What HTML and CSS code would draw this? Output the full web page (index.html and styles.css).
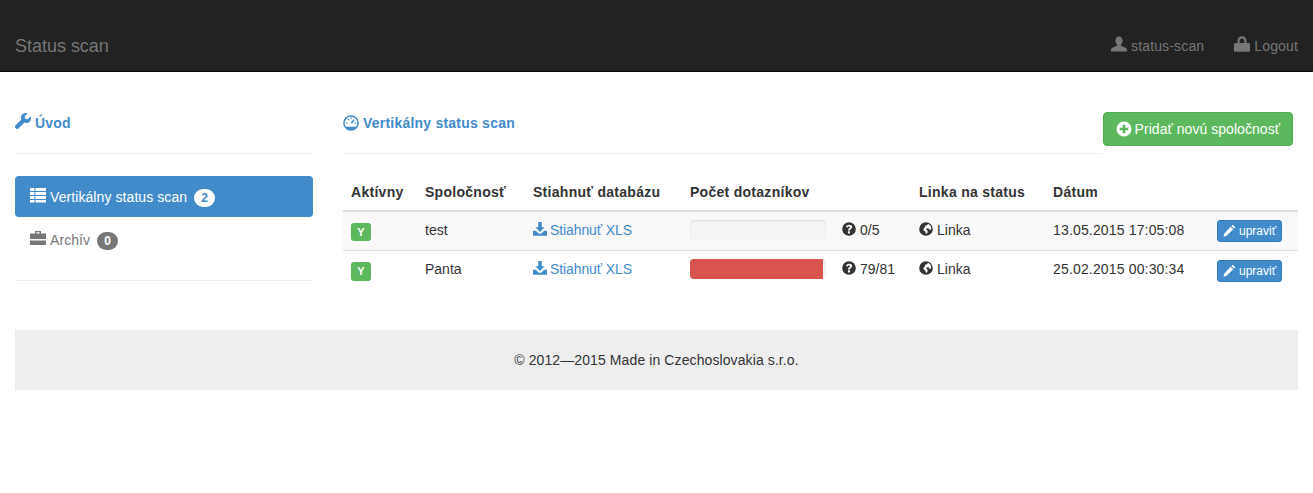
FILE: index.html
```html
<!DOCTYPE html>
<html lang="sk">
<head>
<meta charset="utf-8">
<title>Status scan</title>
<link rel="stylesheet" href="styles.css">
</head>
<body>
<svg class="defs" width="0" height="0" aria-hidden="true">
  <symbol id="i-wrench" viewBox="0 0 16 16"><path d="M15.6 3.4 12.7 6.3 10.2 5.8 9.7 3.3 12.6.4A4.7 4.7 0 0 0 6.4 6.6L.7 12.3a2.1 2.1 0 0 0 3 3L9.4 9.6A4.7 4.7 0 0 0 15.6 3.4Z"/></symbol>
  <symbol id="i-dash" viewBox="0 0 16 16"><path fill-rule="evenodd" d="M8 .2a7.800 7.800 0 1 0 0 15.600 7.800 7.800 0 0 0 0-15.600Zm0 1.500a6.300 6.300 0 0 1 6.300 6.300c0 1.400-.5 2.700-1.200 3.700H2.900A6.300 6.300 0 0 1 8 1.700Z"/><path d="M7.400 2.600h1.200v1.700H7.400zM2.800 7.400h1.700v1.200H2.800zM11.500 7.400h1.700v1.200h-1.700zM4.200 4l.9-.8 1.200 1.200-.8.9zM10.800 4.200l.9.8-2.700 3.800-1.400-1.200z"/></symbol>
  <symbol id="i-list" viewBox="0 0 16 16"><path d="M0 1h4.400v3H0zM5.400 1H16v3H5.400zM0 5h4.400v3H0zM5.400 5H16v3H5.400zM0 9h4.400v3H0zM5.400 9H16v3H5.400zM0 13h4.400v2.600H0zM5.400 13H16v2.600H5.400z"/></symbol>
  <symbol id="i-case" viewBox="0 0 16 16"><path fill-rule="evenodd" d="M5 1h6v2.500h5V9H0V3.500h5V1Zm1.300 1.200v1.300h3.400V2.200H6.300Z"/><path d="M0 10.500h16V15H0z"/></symbol>
  <symbol id="i-user" viewBox="0 0 16 16"><path d="M8 .5c2.300 0 3.600 1.800 3.600 4 0 1.700-.7 3.200-1.600 4v1.300c2.500.8 5 1.800 6 3.400v2.300H0v-2.300c1-1.600 3.500-2.600 6-3.400V8.500c-.9-.8-1.600-2.300-1.600-4 0-2.200 1.300-4 3.600-4Z"/></symbol>
  <symbol id="i-lock" viewBox="0 0 16 16"><path fill-rule="evenodd" d="M8 .3c2.600 0 4.500 1.800 4.500 4.400V7H15a1 1 0 0 1 1 1v6.700a1 1 0 0 1-1 1H1a1 1 0 0 1-1-1V8a1 1 0 0 1 1-1h2.500V4.700C3.500 2.100 5.400.3 8 .3Zm0 2.200c-1.400 0-2.400 1-2.400 2.300V7h4.800V4.800c0-1.300-1-2.300-2.400-2.300Z"/></symbol>
  <symbol id="i-plus" viewBox="0 0 16 16"><path fill-rule="evenodd" d="M8 .5a7.500 7.500 0 1 0 0 15 7.500 7.500 0 0 0 0-15ZM6.700 3.800h2.600v2.900h2.900v2.600H9.300v2.900H6.700V9.300H3.800V6.700h2.900V3.800Z"/></symbol>
  <symbol id="i-down" viewBox="0 0 16 16"><path d="M6 0h4v6h3.200L8 11.400 2.800 6H6zM0 10h3.200l3.500 3.300h2.600L12.800 10H16v5.600H0z"/></symbol>
  <symbol id="i-help" viewBox="0 0 16 16"><path fill-rule="evenodd" d="M8 .2a7.800 7.800 0 1 0 0 15.600A7.800 7.800 0 0 0 8 .2ZM8.200 3c2 0 3.400 1 3.400 2.700 0 1.300-.8 2-1.700 2.600-.6.400-.9.700-.9 1.300H6.900c0-1.300.5-1.900 1.300-2.500.6-.4 1-.7 1-1.200S8.800 5 8 5c-.9 0-1.300.5-1.500 1.300L4.400 5.800C4.800 4 6.200 3 8.200 3ZM6.800 10.600h2.300V13H6.800z"/></symbol>
  <symbol id="i-globe" viewBox="0 0 16 16"><path fill-rule="evenodd" d="M8 .2a7.800 7.800 0 1 0 0 15.600A7.800 7.800 0 0 0 8 .2Zm2.600 1.900 3 2.800.5 3.100-1.700 1.300-1.300-1.800-2.200-.3-.6 1.500 1.700 1.600-.4 2.300-1.600 1.200-.9-2.900-1.900-1.300V7.400L7 5.800l-.3-1.600 1.900-.3z"/></symbol>
  <symbol id="i-pencil" viewBox="0 0 16 16"><path d="M12 .8 15.200 4l-1.600 1.600-3.200-3.200zM9.400 3.400l3.200 3.200-8 8-4 1 1-4z"/></symbol>
</svg>

<header class="topbar">
  <a class="brand">Status scan</a>
  <nav class="topnav">
    <a class="topnav-item"><svg class="icon"><use href="#i-user"/></svg>status-scan</a>
    <a class="topnav-item"><svg class="icon"><use href="#i-lock"/></svg>Logout</a>
  </nav>
</header>

<div class="page">
  <div class="columns">
    <aside class="side">
      <h4 class="head"><svg class="icon"><use href="#i-wrench"/></svg>Úvod</h4>
      <ul class="pills">
        <li class="pill active"><svg class="icon"><use href="#i-list"/></svg>Vertikálny status scan<span class="badge">2</span></li>
        <li class="pill"><svg class="icon"><use href="#i-case"/></svg>Archív<span class="badge">0</span></li>
      </ul>
    </aside>
    <main class="content">
      <div class="content-top">
        <h4 class="head head-main"><svg class="icon"><use href="#i-dash"/></svg>Vertikálny status scan</h4>
        <a class="btn-add"><svg class="icon"><use href="#i-plus"/></svg>Pridať novú spoločnosť</a>
      </div>
      <table class="grid">
        <colgroup>
          <col class="c1"><col class="c2"><col class="c3"><col class="c4"><col class="c5"><col class="c6"><col class="c7"><col class="c8">
        </colgroup>
        <thead>
          <tr><th>Aktívny</th><th>Spoločnosť</th><th>Stiahnuť databázu</th><th colspan="2">Počet dotazníkov</th><th>Linka na status</th><th>Dátum</th><th></th></tr>
        </thead>
        <tbody>
          <tr>
            <td><span class="label">Y</span></td>
            <td>test</td>
            <td><a class="link"><svg class="icon"><use href="#i-down"/></svg>Stiahnuť XLS</a></td>
            <td><div class="progress"></div></td>
            <td><svg class="icon"><use href="#i-help"/></svg>0/5</td>
            <td><svg class="icon"><use href="#i-globe"/></svg>Linka</td>
            <td class="date">13.05.2015 17:05:08</td>
            <td><a class="btn-edit"><svg class="icon"><use href="#i-pencil"/></svg>upraviť</a></td>
          </tr>
          <tr>
            <td><span class="label">Y</span></td>
            <td>Panta</td>
            <td><a class="link"><svg class="icon"><use href="#i-down"/></svg>Stiahnuť XLS</a></td>
            <td><div class="progress"><div class="bar" style="width:97.5%"></div></div></td>
            <td><svg class="icon"><use href="#i-help"/></svg>79/81</td>
            <td><svg class="icon"><use href="#i-globe"/></svg>Linka</td>
            <td class="date">25.02.2015 00:30:34</td>
            <td><a class="btn-edit"><svg class="icon"><use href="#i-pencil"/></svg>upraviť</a></td>
          </tr>
        </tbody>
      </table>
    </main>
  </div>
  <footer class="foot">© 2012—2015 Made in Czechoslovakia s.r.o.</footer>
</div>
</body>
</html>
```

FILE: styles.css
```css
* { box-sizing: border-box; }
html, body { margin: 0; padding: 0; }
body {
  background: #fff;
  color: #333;
  font: 14px/20px "Liberation Sans", Arial, sans-serif;
}
.defs { position: absolute; }
.icon {
  display: inline-block;
  width: 14px;
  height: 14px;
  fill: currentColor;
  vertical-align: -2px;
  margin-right: 4px;
}

.topbar {
  height: 72px;
  background: #222;
  border-bottom: 1px solid #080808;
  padding: 21px 15px 0;
  display: flex;
  justify-content: space-between;
  color: #777;
}
.brand { font-size: 18px; line-height: 50px; letter-spacing: -.02px; }
.topnav { display: flex; gap: 30px; line-height: 50px; letter-spacing: .15px; }
.topnav-item .icon { width: 16px; height: 16px; vertical-align: -1px; }

.page { padding: 0 15px; }
.columns { display: flex; gap: 30px; padding-top: 40px; }
.side { width: 298px; flex: none; }
.content { flex: 1; min-width: 0; }

.head {
  margin: 0;
  font-size: 14px;
  line-height: 20px;
  font-weight: 700;
  color: #428bca;
  letter-spacing: .22px;
}
.head .icon { width: 16px; height: 16px; margin-right: 4px; vertical-align: -1px; }
.side > .head { padding: 1px 0 20px; height: 42px; border-bottom: 1px solid #eee; }

.pills {
  list-style: none;
  margin: 22px 0 0;
  padding: 0 0 18px;
  border-bottom: 1px solid #eee;
  height: 105px;
  width: 298px;
  color: #777;
  letter-spacing: .08px;
}
.pill { height: 41px; padding: 11px 15px; border-radius: 4px; margin-bottom: 2px; }
.pill.active { background: #428bca; color: #fff; }
.pill .icon { width: 16px; height: 16px; margin-right: 4px; vertical-align: -1px; }
.badge {
  display: inline-block;
  min-width: 10px;
  margin-left: 7px;
  padding: 3px 7px;
  border-radius: 10px;
  background: #777;
  color: #fff;
  font-size: 12px;
  font-weight: 700;
  line-height: 12px;
  vertical-align: baseline;
}
.active .badge { background: #fff; color: #428bca; }

.content-top {
  position: relative;
  height: 42px;
}
.head-main { padding-top: 1px; height: 42px; border-bottom: 1px solid #eee; margin-right: 195px; }
.head-main .icon { vertical-align: -1.500px; position: relative; top: 1px; }
.btn-add {
  position: absolute;
  right: 5px;
  top: 0;
  height: 34px;
  padding: 6px 12px;
  border: 1px solid #4cae4c;
  border-radius: 4px;
  background: #5cb85c;
  color: #fff;
  letter-spacing: .05px;
}
.btn-add .icon { width: 16px; height: 16px; vertical-align: -2.500px; margin-right: 3px; }

.grid {
  width: 955px;
  margin-top: 20px;
  border-collapse: collapse;
  table-layout: fixed;
}
.c1 { width: 74px; } .c2 { width: 108px; } .c3 { width: 157px; } .c4 { width: 152px; }
.c5 { width: 77px; } .c6 { width: 134px; } .c7 { width: 164px; } .c8 { width: 89px; }
.grid th {
  padding: 8px;
  text-align: left;
  font-weight: 700;
  letter-spacing: .28px;
  border-bottom: 2px solid #ddd;
}
.grid td { padding: 8px; vertical-align: top; border-bottom: 1px solid #ddd; height: 39px; }
.grid tbody tr:last-child td { border-bottom: 0; }
.grid tbody tr:first-child { background: #f9f9f9; }
.grid tbody tr:last-child .btn-edit { margin-top: 1px; }
.grid tbody tr:last-child .label { margin-top: 3px; height: 19px; line-height: 19px; }
.grid td:nth-child(5) .icon, .grid td:nth-child(6) .icon { vertical-align: -1px; }
.grid th, .grid td { white-space: nowrap; }
.date { letter-spacing: .16px; }

.label {
  display: inline-block;
  width: 20px;
  height: 18px;
  margin-top: 3px;
  border-radius: 3px;
  background: #5cb85c;
  color: #fff;
  font-size: 11px;
  font-weight: 700;
  line-height: 18px;
  text-align: center;
}
.link { color: #428bca; letter-spacing: -.1px; }
.link .icon { vertical-align: -1px; margin-right: 3px; }
.progress {
  width: 136px;
  height: 20px;
  overflow: hidden;
  border-radius: 4px;
  background: #f5f5f5;
  box-shadow: inset 0 1px 2px rgba(0,0,0,.1);
}
.bar { height: 100%; background: #d9534f; }
.btn-edit {
  display: inline-block;
  height: 22px;
  padding: 1px 5px;
  border: 1px solid #357ebd;
  border-radius: 3px;
  background: #428bca;
  color: #fff;
  font-size: 12px;
  line-height: 18px;
}
.btn-edit .icon { width: 13px; height: 13px; margin-right: 3px; vertical-align: -2px; }

.foot {
  margin-top: 40px;
  height: 60px;
  background: #eee;
  text-align: center;
  line-height: 60px;
  letter-spacing: .1px;
}
```
